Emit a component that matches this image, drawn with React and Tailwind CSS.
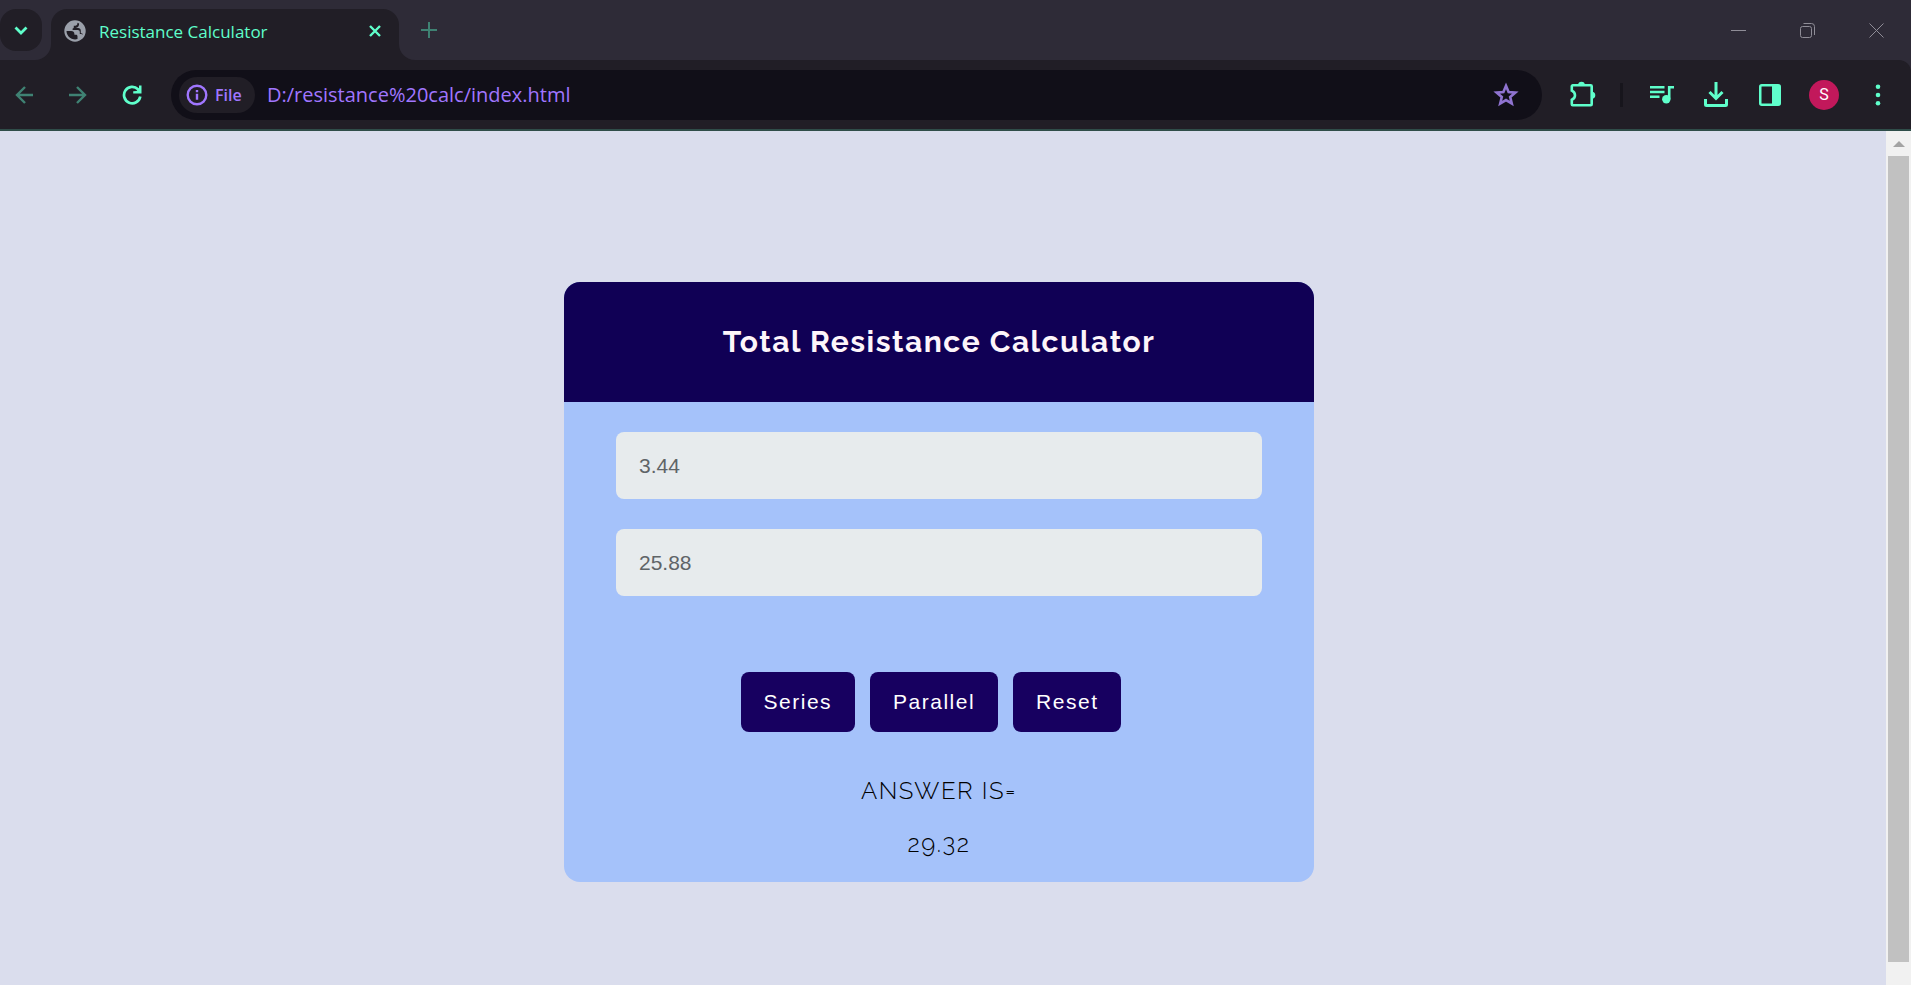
import { useState } from "react";

function Flare({ side }) {
  return (
    <svg width="16" height="16" viewBox="0 0 16 16" className="shrink-0 self-end fill-[#211e26]" aria-hidden="true">
      <path d={side === "left" ? "M16 0v16H0A16 16 0 0 0 16 0z" : "M0 0v16h16A16 16 0 0 1 0 0z"} />
    </svg>
  );
}

function GlobeIcon() {
  return (
    <svg width="22" height="22" viewBox="0 0 22 22" className="shrink-0" aria-hidden="true">
      <circle cx="11" cy="11" r="10.700" fill="#9ba0aa" />
      <path
        fill="#211e26"
        d="M2.500 11h4.700c2 0 3.200 1.200 3.200 3v.8h1.500c1 0 1.600.7 1.600 1.600v2.700A8.600 8.600 0 0 1 2.500 11z"
      />
      <path
        fill="#211e26"
        d="M13.400 2.700v.8c0 1.300-.9 2.200-2.200 2.200H9.800v1.500c0 .7-.5 1.200-1.200 1.300v1.600h5.200c1.200 0 2 .8 2 2v1.800h1.400c.5 0 1 .3 1.300.7A8.600 8.600 0 0 0 19 14l-2.200-.9v-2.300c0-1.600-1.100-2.700-2.700-2.700h-2.600c2.600-.7 3.800-2.500 3.600-4.700z"
      />
    </svg>
  );
}

function WindowButton({ label, children }) {
  return (
    <button type="button" aria-label={label} className="flex h-full w-[69px] items-center justify-center">
      <svg width="15" height="15" viewBox="0 0 15 15" fill="none" stroke="#8f8d97" strokeWidth="1">
        {children}
      </svg>
    </button>
  );
}

function TabStrip() {
  return (
    <header className="flex h-[60px] items-stretch bg-[#2e2b37]">
      <button
        type="button"
        aria-label="Search tabs"
        className="mt-[9px] flex h-[42px] w-[42px] items-center justify-center rounded-2xl bg-[#211e26]"
      >
        <svg width="14" height="9" viewBox="0 0 14 9" fill="none" stroke="#5fffcb" strokeWidth="2.800">
          <path d="M1.500 1.500L7 7l5.500-5.500" />
        </svg>
      </button>
      <div className="-ml-[7px] flex items-end">
        <Flare side="left" />
        <div className="flex h-[51px] w-[348px] items-center rounded-t-2xl bg-[#211e26] pr-4 pb-2 pl-[13px]">
          <GlobeIcon />
          <span className="ml-[13px] flex-1 pt-[2px] font-['Segoe_UI','Open_Sans',sans-serif] text-[17px] leading-6 text-[#5fffcb]">
            Resistance Calculator
          </span>
          <button type="button" aria-label="Close tab" className="flex size-4 items-center justify-center">
            <svg width="12" height="12" viewBox="0 0 12 12" fill="none" stroke="#5fffcb" strokeWidth="2.400">
              <path d="M1 1l10 10M11 1L1 11" />
            </svg>
          </button>
        </div>
        <Flare side="right" />
      </div>
      <button type="button" aria-label="New tab" className="flex w-7 items-center justify-center">
        <svg width="16" height="16" viewBox="0 0 16 16" stroke="#3f8273" strokeWidth="2">
          <path d="M8 0v16M0 8h16" />
        </svg>
      </button>
      <div className="flex-1" />
      <WindowButton label="Minimize">
        <path d="M0 7.500h15" />
      </WindowButton>
      <WindowButton label="Restore">
        <rect x=".5" y="3.500" width="11" height="11" rx="2" />
        <path d="M3.500 .5h8a3 3 0 0 1 3 3v8.500" />
      </WindowButton>
      <WindowButton label="Close">
        <path d="M.5 .5l14 14M14.500 .5l-14 14" />
      </WindowButton>
    </header>
  );
}

function ToolButton({ label, children, className = "text-[#5fffcb]" }) {
  return (
    <button type="button" aria-label={label} className={`flex size-12 shrink-0 items-center justify-center ${className}`}>
      {children}
    </button>
  );
}

function Toolbar() {
  const [url, setUrl] = useState("D:/resistance%20calc/index.html");
  return (
    <div className="bg-[#2e2b37]">
      <nav className="flex h-[71px] items-center gap-[6px] rounded-tr-xl border-b-2 border-[#2f4d49] bg-[#211e26] pr-[9px]">
        <ToolButton label="Back" className="text-[#3f8273]">
          <svg width="18" height="18" viewBox="0 0 18 18" fill="none" stroke="currentColor" strokeWidth="2.400">
            <path d="M18 9H2M10 1L2 9l8 8" />
          </svg>
        </ToolButton>
        <ToolButton label="Forward" className="text-[#3f8273]">
          <svg width="18" height="18" viewBox="0 0 18 18" fill="none" stroke="currentColor" strokeWidth="2.400">
            <path d="M0 9h16M8 1l8 8-8 8" />
          </svg>
        </ToolButton>
        <ToolButton label="Reload">
          <svg width="20" height="20" viewBox="0 0 20 20" fill="none" stroke="currentColor" strokeWidth="2.700">
            <path d="M18.300 11.500A8.200 8.200 0 1 1 16 4.200L17.500 5.800" />
            <path d="M19.500 .5v8h-8.300V6.200l3.300-.2 2.500-2.500V.5z" fill="currentColor" stroke="none" />
          </svg>
        </ToolButton>
        <div className="mr-[9px] ml-[9px] flex h-[50px] flex-1 items-center rounded-full bg-[#110f18] pr-[23px] pl-2 font-['Segoe_UI','Open_Sans',sans-serif]">
          <button
            type="button"
            className="flex h-9 w-[76px] items-center gap-[7px] rounded-full bg-[#211e26] pl-[7px] text-base font-semibold text-[#a076ff]"
          >
            <svg width="22" height="22" viewBox="0 0 22 22" fill="none" stroke="currentColor" strokeWidth="2.400" className="shrink-0">
              <circle cx="11" cy="11" r="9.300" />
              <path d="M11 9.800v6M11 6v2.200" />
            </svg>
            File
          </button>
          <input
            aria-label="Address"
            value={url}
            onChange={(e) => setUrl(e.target.value)}
            className="ml-3 min-w-0 flex-1 bg-transparent text-xl text-[#a076ff] outline-none"
          />
          <button type="button" aria-label="Bookmark this page" className="text-[#8f73d0]">
            <svg width="26" height="26" viewBox="0 0 26 26" fill="none" stroke="currentColor" strokeWidth="2.600">
              <path d="M13 3.800l2.600 6.200 6.800.6-5.200 4.400 1.600 6.600-5.800-3.500-5.800 3.500 1.600-6.600-5.200-4.400 6.800-.6z" />
            </svg>
          </button>
        </div>
        <ToolButton label="Extensions">
          <svg width="30" height="30" viewBox="0 0 30 30" fill="none" stroke="currentColor" strokeWidth="2.600">
            <path d="M6.800 5.300h17.900a1 1 0 0 1 1 1v17.900a1 1 0 0 1-1 1H6.800a1 1 0 0 1-1-1v-4.400c2-.9 3.200-2.600 3.200-4.600s-1.200-3.700-3.200-4.600V6.300a1 1 0 0 1 1-1z" />
            <path d="M12.200 5a3.300 3.300 0 0 1 6.600 0zM25.800 11.700a3.500 3.500 0 0 1 0 7z" fill="currentColor" stroke="none" />
          </svg>
        </ToolButton>
        <div className="mx-[9px] h-6 w-[3px] bg-[#17151c]" />
        <ToolButton label="Media controls">
          <svg width="24" height="20" viewBox="0 0 24 20" fill="none" stroke="currentColor" strokeWidth="2.600">
            <path d="M0 2.300h14.500M0 7h14.500M0 11.700h9.500M19.200 14V2.300H24" />
            <circle cx="16.300" cy="14.300" r="4.200" fill="currentColor" stroke="none" />
          </svg>
        </ToolButton>
        <ToolButton label="Downloads">
          <svg width="24" height="25" viewBox="0 0 24 25" fill="none" stroke="currentColor" strokeWidth="3">
            <path d="M12 0v16M5.500 10L12 16.500 18.500 10M1.500 17v5.500a1 1 0 0 0 1 1h19a1 1 0 0 0 1-1V17" />
          </svg>
        </ToolButton>
        <ToolButton label="Side panel">
          <svg width="22" height="22" viewBox="0 0 22 22" fill="none" stroke="currentColor" strokeWidth="2.500">
            <rect x="1.250" y="1.250" width="19.500" height="19.500" rx="1.500" />
            <path d="M13 1h7v20h-7z" fill="currentColor" stroke="none" />
          </svg>
        </ToolButton>
        <ToolButton label="Profile">
          <span className="flex size-[30px] items-center justify-center rounded-full bg-[#c2185b] font-['Roboto',sans-serif] text-base text-white">
            S
          </span>
        </ToolButton>
        <ToolButton label="Menu">
          <svg width="6" height="22" viewBox="0 0 6 22" fill="currentColor">
            <circle cx="3" cy="2.700" r="2.300" />
            <circle cx="3" cy="11" r="2.300" />
            <circle cx="3" cy="19.300" r="2.300" />
          </svg>
        </ToolButton>
      </nav>
    </div>
  );
}

function ResistanceField({ label, value, onChange }) {
  return (
    <input
      aria-label={label}
      inputMode="decimal"
      value={value}
      onChange={(e) => onChange(e.target.value)}
      className="mb-[30px] block h-[67px] w-full rounded-lg bg-[#e7ebed] px-[23px] font-['Liberation_Sans',Arial,sans-serif] text-[21px] tracking-normal text-[#5f6467] outline-none"
    />
  );
}

function ActionButton({ onClick, children }) {
  return (
    <button
      type="button"
      onClick={onClick}
      className="h-[60px] rounded-lg bg-[#170060] px-[23px] font-['Liberation_Sans',Arial,sans-serif] text-[21px] text-white"
    >
      {children}
    </button>
  );
}

function Calculator() {
  const [first, setFirst] = useState("3.44");
  const [second, setSecond] = useState("25.88");
  const [answer, setAnswer] = useState("29.32");
  const a = Number(first);
  const b = Number(second);
  return (
    <section className="w-full max-w-[750px] overflow-hidden rounded-2xl bg-[#a5c2fa] font-['Raleway','Lato',sans-serif] text-[30px] tracking-wider">
      <h1 className="flex h-[120px] items-center justify-center bg-[#100055] pb-[2px] font-bold text-[#fdf5fa]">
        Total Resistance Calculator
      </h1>
      <div className="px-[52px] pt-[30px] pb-5">
        <ResistanceField label="First resistance" value={first} onChange={setFirst} />
        <ResistanceField label="Second resistance" value={second} onChange={setSecond} />
        <div className="mt-[76px] flex justify-center gap-[15px] pr-4">
          <ActionButton onClick={() => setAnswer((a + b).toFixed(2))}>Series</ActionButton>
          <ActionButton onClick={() => setAnswer(((a * b) / (a + b)).toFixed(2))}>Parallel</ActionButton>
          <ActionButton
            onClick={() => {
              setFirst("");
              setSecond("");
              setAnswer("");
            }}
          >
            Reset
          </ActionButton>
        </div>
        <div className="mt-[41px] flex flex-col gap-[17px] text-center text-[24px] leading-9 font-light text-black">
          <p>ANSWER IS=</p>
          <p className="min-h-9">{answer}</p>
        </div>
      </div>
    </section>
  );
}

function Scrollbar() {
  return (
    <div className="flex w-[25px] shrink-0 flex-col items-center bg-[#f1f1f1]" aria-hidden="true">
      <svg width="12" height="25" viewBox="0 0 12 25" fill="#a3a3a3">
        <path d="M6 10l6 6H0z" />
      </svg>
      <div className="w-[21px] flex-1 bg-[#c1c1c1]" />
      <div className="h-[23px]" />
    </div>
  );
}

export default function App() {
  return (
    <div className="flex min-h-screen flex-col">
      <TabStrip />
      <Toolbar />
      <div className="flex flex-1 items-stretch">
        <main className="flex flex-1 items-start justify-center bg-[#dadded] pt-[151px] pr-2">
          <Calculator />
        </main>
        <Scrollbar />
      </div>
    </div>
  );
}
